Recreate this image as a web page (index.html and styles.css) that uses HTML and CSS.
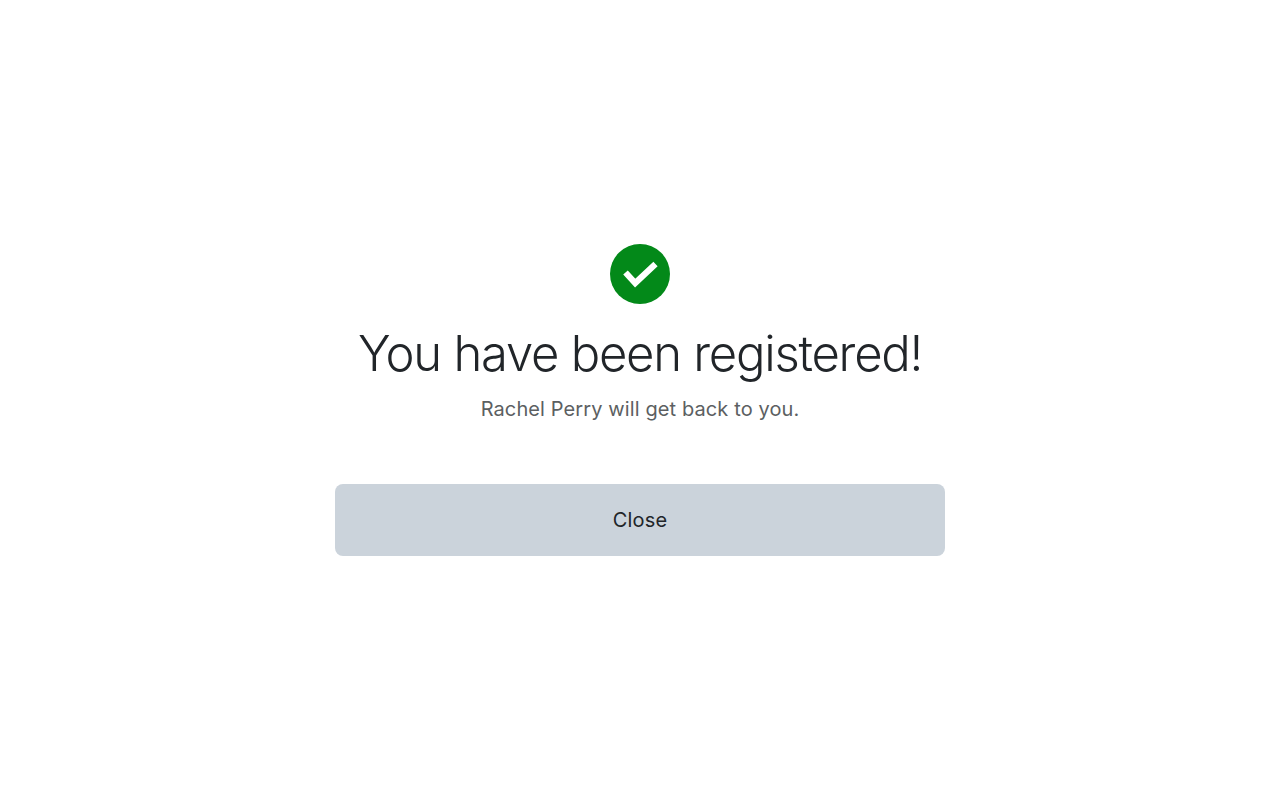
FILE: index.html
```html
<!DOCTYPE html>
<html lang="en">
<head>
  <meta charset="UTF-8" />
  <title>Registered</title>
  <link rel="stylesheet" href="styles.css">
</head>
<body>
  <main class="confirm">
    <svg class="check" width="60" height="60" viewBox="0 0 60 60">
      <circle cx="30" cy="30" r="30" fill="#038919"/>
      <path d="M15.500 28.500l9.700 10.500 20.300-19" fill="none" stroke="#fff" stroke-width="6.200"/>
    </svg>
    <h1>You have been registered!</h1>
    <p>Rachel Perry will get back to you.</p>
    <button class="close">Close</button>
  </main>
</body>
</html>
```

FILE: styles.css
```css
body {
  margin: 0;
  height: 800px;
  background: #fff;
  font-family: Inter, sans-serif;
  display: flex;
  justify-content: center;
}
.confirm {
  width: 610px;
  padding-top: 244px;
  display: flex;
  flex-direction: column;
  align-items: center;
}
.check {
  display: block;
}
h1 {
  margin: 18px 0 0;
  font-size: 49px;
  line-height: 64px;
  font-weight: 300;
  letter-spacing: -1.25px;
  color: #212529;
}
p {
  margin: 8px 0 0;
  font-size: 20px;
  line-height: 30px;
  letter-spacing: 0.11px;
  color: #5c5f62;
}
.close {
  margin-top: 60px;
  width: 100%;
  height: 72px;
  border: none;
  border-radius: 8px;
  background: #cbd3db;
  color: #212529;
  font-family: inherit;
  font-size: 20px;
  letter-spacing: 0.2px;
}
```
